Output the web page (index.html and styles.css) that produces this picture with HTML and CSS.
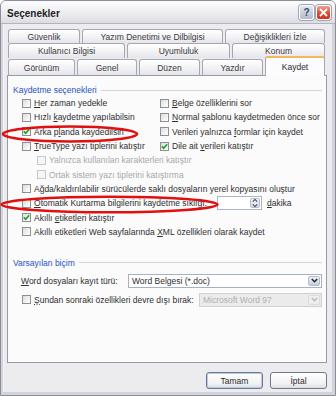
FILE: index.html
```html
<!DOCTYPE html>
<html>
<head>
<meta charset="utf-8">
<link rel="stylesheet" href="styles.css">
</head>
<body>
<div class="window">
  <div class="titlebar">
    <span class="title">Seçenekler</span>
    <div class="caption-btns">
      <span class="cbtn help">?</span>
      <span class="cbtn close"><svg width="9" height="9" viewBox="0 0 9 9"><path d="M1 1L8 8M8 1L1 8" stroke="#fff" stroke-width="1.8"/></svg></span>
    </div>
  </div>
  <div class="client">
    <div class="tabs">
      <div class="tabrow r1">
        <div class="tab t-guv">Güvenlik</div>
        <div class="tab t-yaz">Yazım Denetimi ve Dilbilgisi</div>
        <div class="tab grow">Değişiklikleri İzle</div>
      </div>
      <div class="tabrow r2">
        <div class="tab t-kul">Kullanıcı Bilgisi</div>
        <div class="tab t-uyu">Uyumluluk</div>
        <div class="tab grow">Konum</div>
      </div>
      <div class="tabrow r3">
        <div class="tab t-gor">Görünüm</div>
        <div class="tab t-gen">Genel</div>
        <div class="tab t-duz">Düzen</div>
        <div class="tab t-ydr">Yazdır</div>
        <div class="tab active grow">Kaydet</div>
      </div>
    </div>
    <div class="panel">
      <div class="legend g1"><span>Kaydetme seçenekleri</span></div>
      <div class="grid2">
        <div class="opt"><span class="cb"></span><span><u>H</u>er zaman yedekle</span></div>
        <div class="opt"><span class="cb"></span><span><u>B</u>elge özelliklerini sor</span></div>
        <div class="opt"><span class="cb"></span><span>Hızlı <u>k</u>aydetme yapılabilsin</span></div>
        <div class="opt"><span class="cb"></span><span><u>N</u>ormal şablonu kaydetmeden önce sor</span></div>
        <div class="opt"><span class="cb on"><svg width="7" height="7" viewBox="0 0 7 7"><path d="M0.8 3.4L2.7 5.3L6.2 1.2" fill="none" stroke="#21a121" stroke-width="1.6"/></svg></span><span>Arka p<u>l</u>anda kaydedilsin</span></div>
        <div class="opt"><span class="cb"></span><span>Verileri yalnızca <u>f</u>ormlar için kaydet</span></div>
        <div class="opt"><span class="cb"></span><span><u>T</u>rueType yazı tiplerini katıştır</span></div>
        <div class="opt"><span class="cb on"><svg width="7" height="7" viewBox="0 0 7 7"><path d="M0.8 3.4L2.7 5.3L6.2 1.2" fill="none" stroke="#21a121" stroke-width="1.6"/></svg></span><span>Dile ait <u>v</u>erileri katıştır</span></div>
      </div>
      <div class="opt indent dis"><span class="cb"></span><span>Yalnızca kullanılan karakterleri katıştır</span></div>
      <div class="opt indent dis"><span class="cb"></span><span>Ortak sistem yazı tiplerini katıştırma</span></div>
      <div class="opt single"><span class="cb"></span><span>Ağda/kaldırılabilir sürücülerde saklı dosyaların yerel kopyasını oluştur</span></div>
      <div class="opt single"><span class="cb"></span><span class="autolabel"><u>O</u>tomatik Kurtarma bilgilerini kaydetme sıklığı:</span>
        <span class="spin"><span class="spin-text"></span><span class="spin-btn"><svg width="9" height="12" viewBox="0 0 9 12"><path d="M2 4.5L4.5 2L7 4.5M2 7.5L4.5 10L7 7.5" fill="none" stroke="#3a4a60" stroke-width="1.3"/></svg></span></span>
        <span class="dakika"><u>d</u>akika</span></div>
      <div class="opt single"><span class="cb on"><svg width="7" height="7" viewBox="0 0 7 7"><path d="M0.8 3.4L2.7 5.3L6.2 1.2" fill="none" stroke="#21a121" stroke-width="1.6"/></svg></span><span>Akıllı <u>e</u>tiketleri katıştır</span></div>
      <div class="opt single"><span class="cb"></span><span>Akıllı etiketleri Web sayfalarında <u>X</u>ML özellikleri olarak kaydet</span></div>

      <div class="legend g2"><span>Varsayılan biçim</span></div>
      <div class="frow">
        <span class="flabel"><u>W</u>ord dosyaları kayıt türü:</span>
        <span class="select wide"><span class="sel-text">Word Belgesi (*.doc)</span><span class="sel-btn"><svg width="9" height="9" viewBox="0 0 9 9"><path d="M1.8 3L4.5 5.7L7.2 3" fill="none" stroke="#2a2a3a" stroke-width="1.6"/></svg></span></span>
      </div>
      <div class="frow second">
        <span class="cb"></span>
        <span class="flabel2"><u>Ş</u>undan sonraki özellikleri devre dışı bırak:</span>
        <span class="select narrow disabled"><span class="sel-text">Microsoft Word 97</span><span class="sel-btn"><svg width="9" height="9" viewBox="0 0 9 9"><path d="M1.8 3L4.5 5.7L7.2 3" fill="none" stroke="#b8b8b8" stroke-width="1.4"/></svg></span></span>
      </div>
    </div>
    <div class="buttons">
      <span class="btn focus">Tamam</span>
      <span class="btn">İptal</span>
    </div>
  </div>
  <svg class="marks" width="336" height="396" viewBox="0 0 336 396">
    <ellipse cx="70" cy="134" rx="67" ry="7.5" fill="none" stroke="#e01010" stroke-width="2.6"/>
    <ellipse cx="109.5" cy="204.5" rx="108" ry="7.8" fill="none" stroke="#e01010" stroke-width="2.6"/>
  </svg>
</div>
</body>
</html>
```
FILE: styles.css
```css
html, body {
  margin: 0;
  padding: 0;
}
body {
  width: 336px;
  height: 396px;
  overflow: hidden;
  font-family: "Liberation Sans", Arial, sans-serif;
  font-size: 8.5px;
  color: #2e2e2e;
  background: #ffffff;
}
.window {
  position: relative;
  width: 336px;
  height: 396px;
  box-sizing: border-box;
  border: 1px solid #8c8c9a;
  border-radius: 6px 6px 0 0;
  background: #d3d3da;
  padding: 0 3px 3px 3px;
  display: flex;
  flex-direction: column;
}
.titlebar {
  margin: 0 -3px;
  height: 23px;
  box-sizing: border-box;
  padding: 0 4px 0 6px;
  display: flex;
  align-items: center;
  justify-content: space-between;
  background: linear-gradient(#fdfdfe, #eeeef2 50%, #dcdce2);
  border-radius: 5px 5px 0 0;
  border-bottom: 1px solid #b4b4c0;
}
.title {
  font-size: 10px;
  font-weight: bold;
  color: #1e1e24;
  padding-top: 2px;
}
.caption-btns {
  display: flex;
  gap: 2px;
  padding-top: 1px;
}
.cbtn {
  width: 15px;
  height: 15px;
  box-sizing: border-box;
  border: 1px solid #ffffff;
  border-radius: 3px;
  display: flex;
  align-items: center;
  justify-content: center;
  box-shadow: 0 0 0 1px #a0a4b4;
}
.help {
  background: linear-gradient(#e2e6ee, #b4bccc);
  color: #34467a;
  font-weight: bold;
  font-size: 10px;
}
.close {
  background: linear-gradient(#f0a090, #d84a2c 60%, #c8381c);
}
.client {
  flex: 1;
  background: #ececef;
  padding: 5px 5px 0 3px;
  display: flex;
  flex-direction: column;
  border-left: 1px solid #f4f4f6;
  margin-left: -1px;
}
.tabs {
  margin-left: 1px;
  width: 317px;
  display: flex;
  flex-direction: column;
}
.tabrow {
  display: flex;
  gap: 2px;
}
.r1 { height: 14px; }
.r2 { height: 15px; }
.r3 { height: 16px; margin-top: 1px; }
.tab {
  box-sizing: border-box;
  border: 1px solid #a4a8b4;
  border-bottom: none;
  border-radius: 3px 3px 0 0;
  background: linear-gradient(#ffffff, #f1f1f4 60%, #e4e4ea);
  color: #3a3a3a;
  display: flex;
  align-items: center;
  justify-content: center;
  white-space: nowrap;
}
.grow { flex: 1; }
.t-guv { width: 72px; }
.t-yaz { width: 141px; }
.t-kul { width: 117px; }
.t-uyu { width: 103px; }
.t-gor { width: 67px; }
.t-gen { width: 60px; }
.t-duz { width: 61px; }
.t-ydr { width: 61px; }
.tab.active {
  position: relative;
  z-index: 2;
  margin-top: -3px;
  height: 20px;
  background: #fcfcfe;
  border-top: 2px solid #f0b858;
  align-items: flex-start;
  padding-top: 4px;
  color: #2a2a2a;
}
.panel {
  position: relative;
  z-index: 1;
  width: 320px;
  height: 288px;
  box-sizing: border-box;
  border: 1px solid #949ca6;
  background: #fbfbfc;
  padding: 0 4px 0 5px;
  display: flex;
  flex-direction: column;
}
.legend {
  height: 12px;
  display: flex;
  align-items: center;
  color: #2452c4;
}
.legend::after {
  content: "";
  flex: 1;
  height: 1px;
  background: #d4d4dc;
  margin-left: 4px;
}
.g1 { margin-top: 8px; }
.g2 { margin-top: 18px; }
.grid2 {
  display: grid;
  grid-template-columns: 138px 1fr;
  margin-left: 9px;
}
.opt {
  height: 14.3px;
  display: flex;
  align-items: center;
  white-space: nowrap;
}
.single { margin-left: 9px; }
.indent { margin-left: 24px; }
.cb {
  width: 9px;
  height: 9px;
  flex: none;
  box-sizing: border-box;
  border: 1px solid #8c8e98;
  background: linear-gradient(135deg, #dcdcd8, #f6f6f4 70%, #ffffff);
  margin-right: 3px;
  display: flex;
  align-items: center;
  justify-content: center;
}
.dis { color: #a8a8a8; }
.dis .cb {
  border-color: #c8c8cc;
  background: #f6f6f6;
}
.autolabel {
  width: 183px;
  flex: none;
}
.spin {
  width: 45px;
  height: 14px;
  box-sizing: border-box;
  border: 1px solid #a8b6c8;
  background: #ffffff;
  display: flex;
  justify-content: flex-end;
  padding: 1px;
}
.spin-btn {
  width: 10px;
  box-sizing: border-box;
  border: 1px solid #b8bcc8;
  border-radius: 2px;
  background: linear-gradient(#f4f4f8, #dcdee6);
  display: flex;
  align-items: center;
  justify-content: center;
}
.dakika { margin-left: 5px; }
.frow {
  display: flex;
  align-items: center;
  height: 14px;
  margin-top: 5px;
  white-space: nowrap;
}
.frow.second {
  margin-left: 9px;
}
.flabel {
  width: 107px;
  margin-left: 8px;
  flex: none;
}
.flabel2 {
  width: 165px;
  flex: none;
}
.select {
  height: 14px;
  box-sizing: border-box;
  border: 1px solid #a4b2c4;
  background: #ffffff;
  display: flex;
  align-items: stretch;
  padding: 1px;
}
.select.wide { width: 194px; }
.select.narrow { width: 123px; }
.sel-text {
  flex: 1;
  padding-left: 2px;
  display: flex;
  align-items: center;
}
.sel-btn {
  width: 12px;
  box-sizing: border-box;
  border: 1px solid #b4bccc;
  border-radius: 2px;
  background: linear-gradient(#eef0f6, #c8cedc);
  display: flex;
  align-items: center;
  justify-content: center;
}
.select.disabled {
  background: #ebebeb;
  border-color: #d0d0d0;
  color: #b0b0b0;
}
.select.disabled .sel-btn {
  background: #eeeeee;
  border-color: #dcdcdc;
}
.buttons {
  display: flex;
  justify-content: flex-end;
  gap: 7px;
  margin-top: 9px;
  padding-right: 0;
}
.btn {
  width: 57px;
  height: 17px;
  box-sizing: border-box;
  border: 1px solid #6c7a8e;
  border-radius: 3px;
  background: linear-gradient(#ffffff, #f2f2f4 70%, #dcdce2);
  display: flex;
  align-items: center;
  justify-content: center;
  color: #2a2a2a;
}
.btn.focus {
  box-shadow: inset 0 0 0 1px #b8cae8;
}
.marks {
  position: absolute;
  left: -1px;
  top: -1px;
  pointer-events: none;
  z-index: 5;
}
```
